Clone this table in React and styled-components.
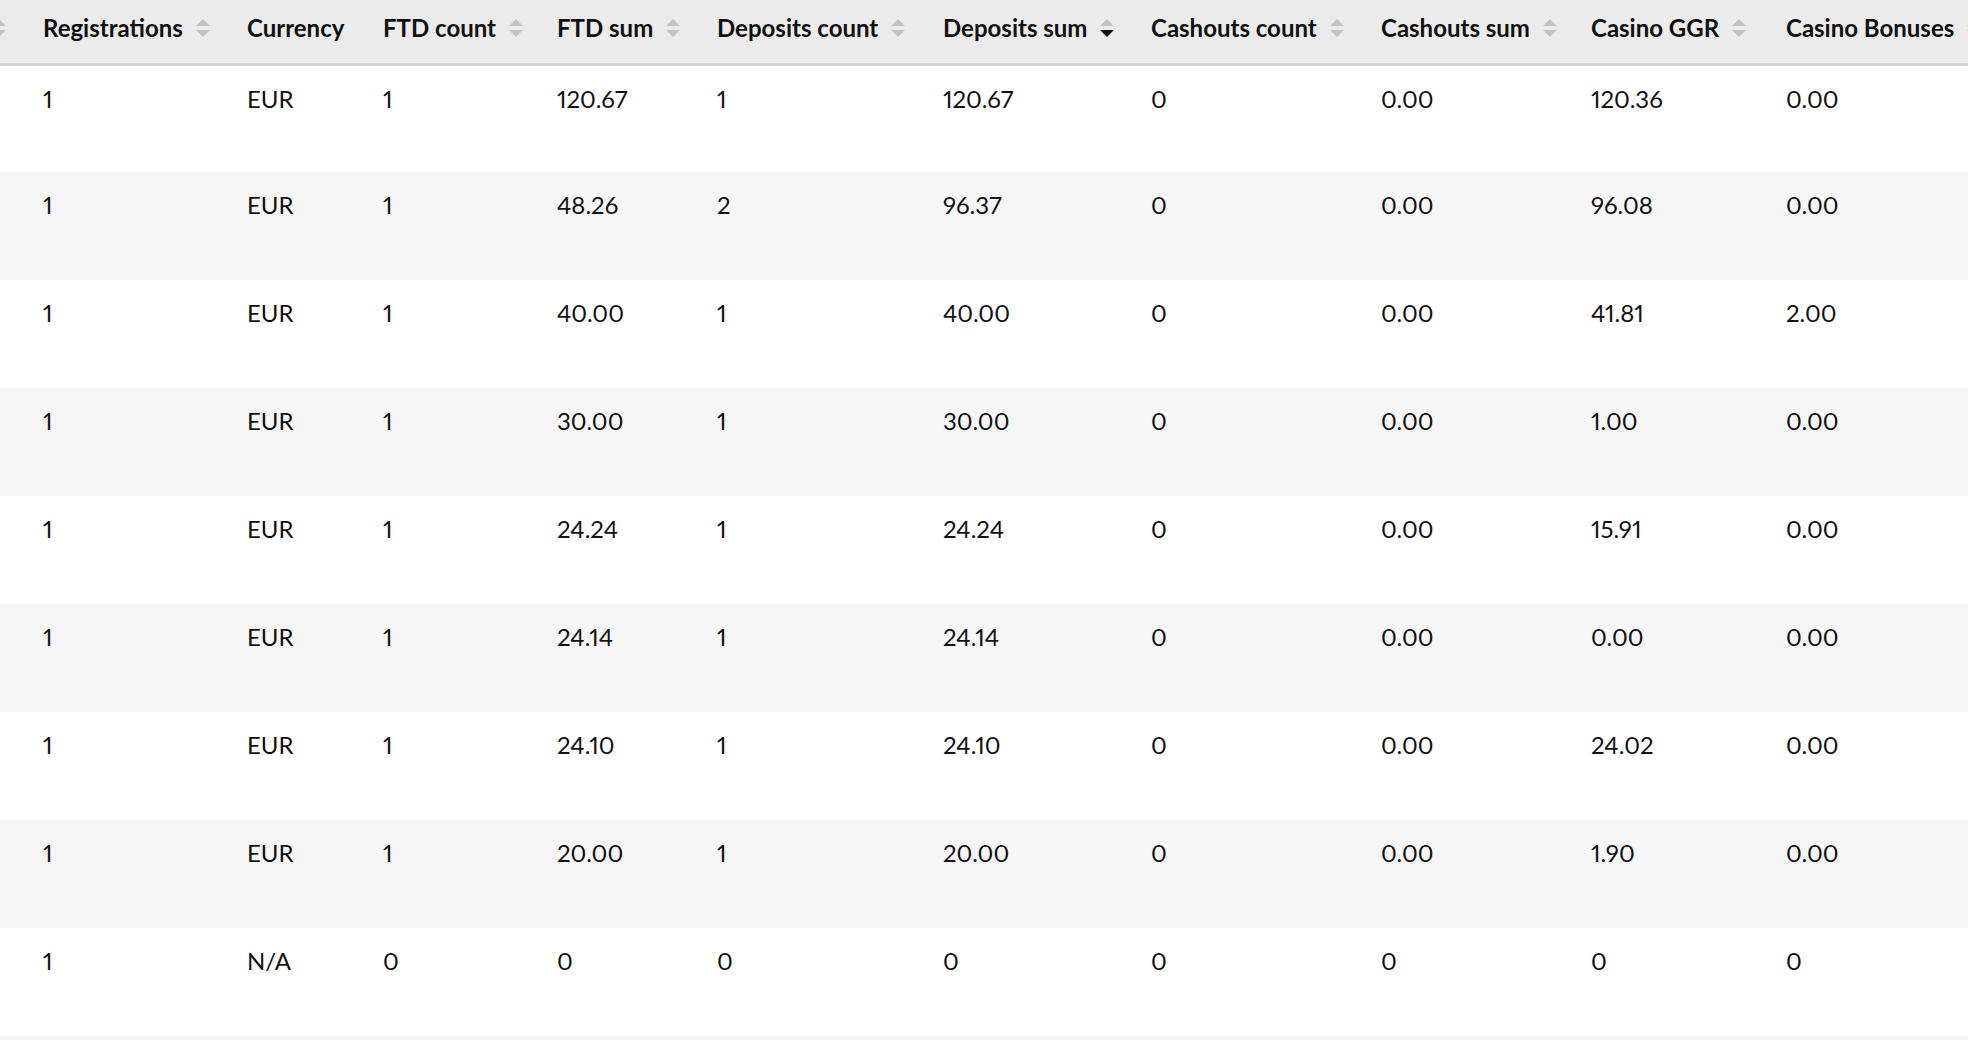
import React, { useLayoutEffect, useRef } from "react";
import styled, { createGlobalStyle } from "styled-components";

const GlobalStyle = createGlobalStyle`
  html, body {
    margin: 0;
    padding: 0;
    overflow: hidden;
    background: #ffffff;
  }
  body {
    font-family: Lato, "Noto Sans", sans-serif;
    color: #111111;
  }
`;

const Scroller = styled.div`
  width: 100%;
  overflow-x: auto;
  scrollbar-width: none;
  &::-webkit-scrollbar {
    display: none;
  }
`;

const Table = styled.table`
  border-collapse: collapse;
  table-layout: fixed;
  width: 2173px;
`;

const HeadCell = styled.th`
  height: 64px;
  padding: 14px 0 0 16px;
  box-sizing: border-box;
  vertical-align: top;
  text-align: ${props => (props.$align === "right" ? "right" : "left")};
  padding-right: ${props => (props.$align === "right" ? "21px" : "0")};
  background: #ebebeb;
  border-bottom: 3px solid #d2d2d2;
  font-size: 24px;
  font-weight: 700;
  line-height: 1.2;
  white-space: nowrap;
  overflow: hidden;
`;

const HeadLabel = styled.span`
  display: inline-flex;
  align-items: center;
  gap: 13px;
  min-height: 28px;
`;

const Row = styled.tr`
  background: ${props => (props.$striped ? "#f6f6f6" : "#ffffff")};
`;

const Cell = styled.td`
  height: 108px;
  padding: 19px 0 0 16px;
  box-sizing: border-box;
  vertical-align: top;
  font-size: 24px;
  line-height: 1.2;
  font-variant-numeric: proportional-nums;
  white-space: nowrap;
  overflow: hidden;
`;

const SortIcon = ({ dir }) => (
  <svg width="14" height="18" viewBox="0 0 14 18" style={{ flexShrink: 0 }}>
    <polygon points="7,0 14,7 0,7" fill={dir === "asc" ? "#111" : "#c2c2c2"} />
    <polygon points="0,11 14,11 7,18" fill={dir === "desc" ? "#111" : "#c2c2c2"} />
  </svg>
);

// the first column is scrolled out of view, only its sort arrows peek in
const columns = [
  { key: "hidden", title: "", width: 200, sortable: true, align: "right" },
  { key: "reg", title: "Registrations", width: 204, sortable: true },
  { key: "cur", title: "Currency", width: 136 },
  { key: "ftdCount", title: "FTD count", width: 174, sortable: true },
  { key: "ftdSum", title: "FTD sum", width: 160, sortable: true },
  { key: "depCount", title: "Deposits count", width: 226, sortable: true },
  { key: "depSum", title: "Deposits sum", width: 208, sortable: true, dir: "desc" },
  { key: "cashCount", title: "Cashouts count", width: 230, sortable: true },
  { key: "cashSum", title: "Cashouts sum", width: 210, sortable: true },
  { key: "ggr", title: "Casino GGR", width: 195, sortable: true },
  { key: "bonus", title: "Casino Bonuses", width: 230, sortable: true },
];

const row = (reg, cur, ftdCount, ftdSum, depCount, depSum, cashCount, cashSum, ggr, bonus) => ({
  hidden: "", reg, cur, ftdCount, ftdSum, depCount, depSum, cashCount, cashSum, ggr, bonus,
});

const rows = [
  row("1", "EUR", "1", "120.67", "1", "120.67", "0", "0.00", "120.36", "0.00"),
  row("1", "EUR", "1", "48.26", "2", "96.37", "0", "0.00", "96.08", "0.00"),
  row("1", "EUR", "1", "40.00", "1", "40.00", "0", "0.00", "41.81", "2.00"),
  row("1", "EUR", "1", "30.00", "1", "30.00", "0", "0.00", "1.00", "0.00"),
  row("1", "EUR", "1", "24.24", "1", "24.24", "0", "0.00", "15.91", "0.00"),
  row("1", "EUR", "1", "24.14", "1", "24.14", "0", "0.00", "0.00", "0.00"),
  row("1", "EUR", "1", "24.10", "1", "24.10", "0", "0.00", "24.02", "0.00"),
  row("1", "EUR", "1", "20.00", "1", "20.00", "0", "0.00", "1.90", "0.00"),
  row("1", "N/A", "0", "0", "0", "0", "0", "0", "0", "0"),
  row("", "", "", "", "", "", "", "", "", ""),
];

export default function App() {
  const scrollRef = useRef(null);
  const firstColRef = useRef(null);

  useLayoutEffect(() => {
    // keep the table scrolled so that Registrations starts at 27px
    if (scrollRef.current && firstColRef.current) {
      scrollRef.current.scrollLeft = firstColRef.current.offsetLeft - 27;
    }
  }, []);

  return (
    <>
      <GlobalStyle />
      <Scroller ref={scrollRef}>
        <Table>
          <colgroup>
            {columns.map(c => (
              <col key={c.key} style={{ width: c.width }} />
            ))}
          </colgroup>
          <thead>
            <tr>
              {columns.map(c => (
                <HeadCell
                  key={c.key}
                  $align={c.align}
                  ref={c.key === "reg" ? firstColRef : undefined}
                >
                  <HeadLabel>
                    {c.title}
                    {c.sortable && <SortIcon dir={c.dir} />}
                  </HeadLabel>
                </HeadCell>
              ))}
            </tr>
          </thead>
          <tbody>
            {rows.map((r, i) => (
              <Row key={i} $striped={i % 2 === 1}>
                {columns.map(c => (
                  <Cell key={c.key}>{r[c.key]}</Cell>
                ))}
              </Row>
            ))}
          </tbody>
        </Table>
      </Scroller>
    </>
  );
}
